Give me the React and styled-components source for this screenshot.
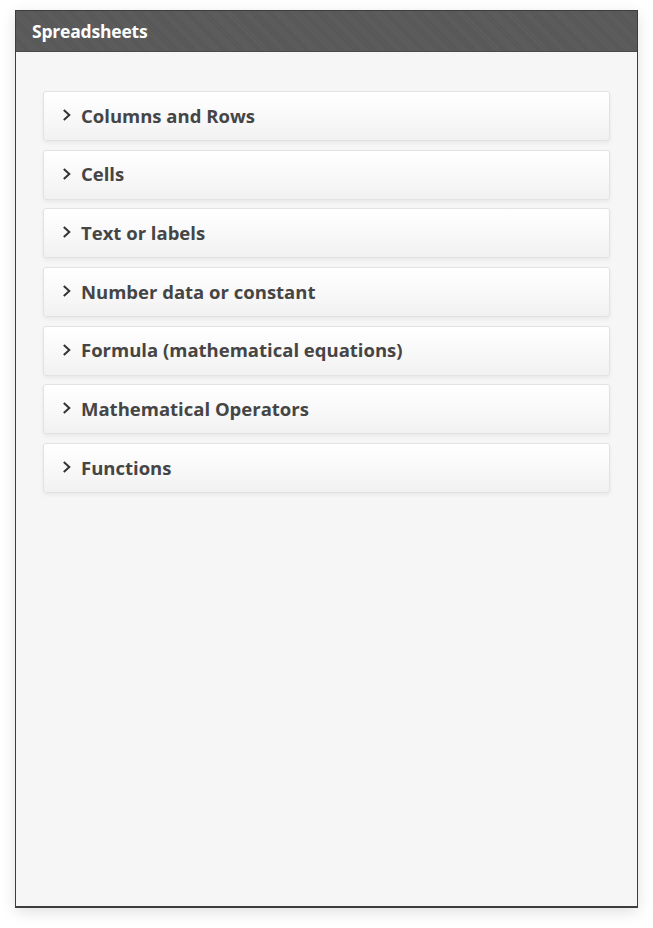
import React from "react";
import styled, { createGlobalStyle } from "styled-components";

const Global = createGlobalStyle`
  html, body { margin: 0; padding: 0; background: #ffffff; }
  body { font-family: "Open Sans", "Noto Sans", Arial, sans-serif; }
`;

const Page = styled.div`
  padding: 10px 15px 0 15px;
  width: 653px;
  height: 928px;
  box-sizing: border-box;
`;

const Panel = styled.div`
  width: 623px;
  height: 898px;
  box-sizing: border-box;
  border: 1px solid #3d3d3d;
  border-bottom-width: 2px;
  background: #f6f6f6;
  box-shadow: 0 4px 14px rgba(0, 0, 0, 0.12);
  display: flex;
  flex-direction: column;
`;

const Header = styled.div`
  height: 40px;
  flex: none;
  background-color: #595959;
  background-image: repeating-linear-gradient(
    45deg,
    rgba(255, 255, 255, 0.03) 0 1px,
    rgba(0, 0, 0, 0.03) 1px 2px
  );
  border-bottom: 1px solid #4a4a4a;
  display: flex;
  align-items: center;
  padding: 0 16px;
  color: #ffffff;
  font-weight: 700;
  font-size: 17.5px;
  letter-spacing: -0.2px;
`;

const Body = styled.div`
  flex: 1;
  padding: 39px 27px;
  display: flex;
  flex-direction: column;
  gap: 8.7px;
`;

const Item = styled.button`
  all: unset;
  box-sizing: border-box;
  height: 50px;
  width: 100%;
  display: flex;
  align-items: center;
  gap: 9px;
  padding: 0 0 2px 17px;
  border: 1px solid #e2e2e2;
  border-radius: 3px;
  background: linear-gradient(to bottom, #ffffff 0%, #f9f9f9 50%, #f1f1f1 100%);
  box-shadow: 0 2px 4px rgba(0, 0, 0, 0.06);
  color: #454545;
  font-weight: 700;
  font-size: 18.5px;
  cursor: pointer;
`;

const Chevron = () => (
  <svg width="11" height="14" viewBox="0 0 11 14" aria-hidden="true">
    <path d="M2.8 2 L8.3 7 L2.8 12" fill="none" stroke="#333" strokeWidth="2" />
  </svg>
);

const items = [
  "Columns and Rows",
  "Cells",
  "Text or labels",
  "Number data or constant",
  "Formula (mathematical equations)",
  "Mathematical Operators",
  "Functions",
];

export default function App() {
  return (
    <Page>
      <Global />
      <Panel>
        <Header>Spreadsheets</Header>
        <Body>
          {items.map((t) => (
            <Item key={t}>
              <Chevron />
              {t}
            </Item>
          ))}
        </Body>
      </Panel>
    </Page>
  );
}
